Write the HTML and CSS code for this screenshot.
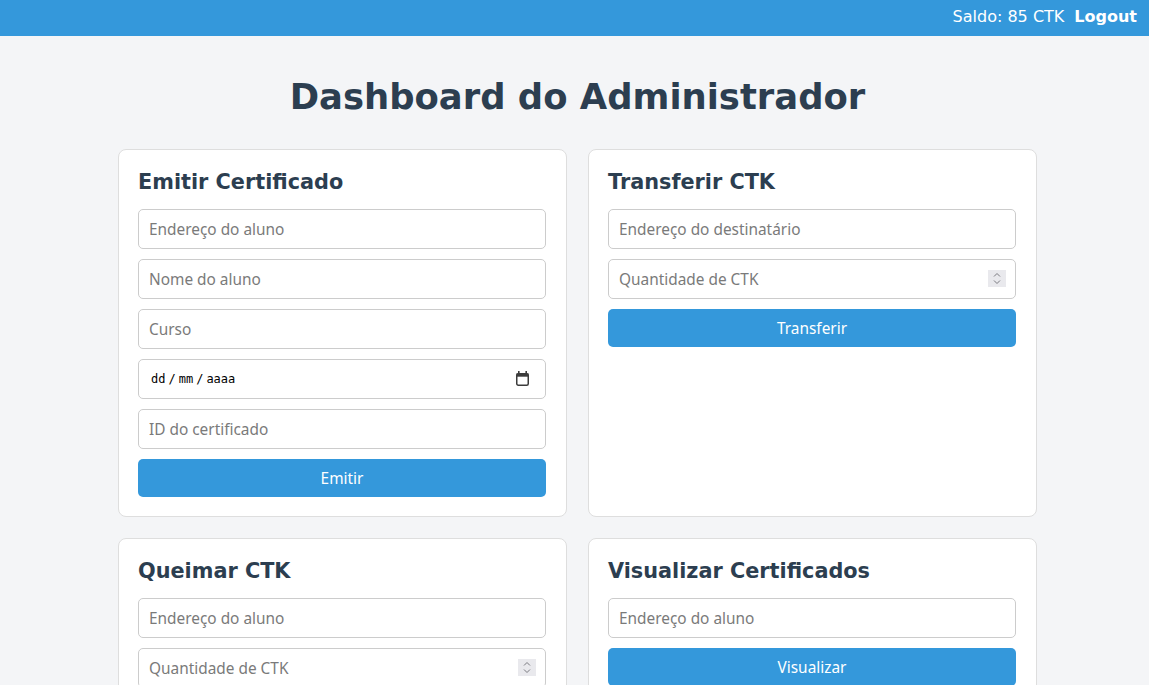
FILE: index.html
```html
<!DOCTYPE html>
<html lang="pt-BR">
<head>
<meta charset="utf-8">
<title>Dashboard do Administrador</title>
<link rel="stylesheet" href="styles.css">
</head>
<body>
<header class="topbar">
  <span class="balance">Saldo: 85 CTK</span>
  <a class="logout" href="#">Logout</a>
</header>
<main class="page">
  <h1 class="title">Dashboard do Administrador</h1>
  <div class="grid">
    <section class="card">
      <h3 class="card-title">Emitir Certificado</h3>
      <input class="field" type="text" placeholder="Endereço do aluno">
      <input class="field" type="text" placeholder="Nome do aluno">
      <input class="field" type="text" placeholder="Curso">
      <div class="field date-field" role="textbox" aria-label="Data">
        <span class="date-part">dd</span><span class="date-sep">/</span><span class="date-part">mm</span><span class="date-sep">/</span><span class="date-part">aaaa</span>
        <svg class="cal-icon" width="15" height="15" viewBox="0 0 15 15" aria-hidden="true">
          <rect x="3" y="0" width="1.6" height="2.5" fill="#3c3c3c"/>
          <rect x="10.4" y="0" width="1.6" height="2.5" fill="#3c3c3c"/>
          <rect x="1.75" y="2.75" width="11.5" height="11.5" rx="1.5" fill="none" stroke="#3c3c3c" stroke-width="1.5"/>
          <rect x="1.5" y="2.5" width="12" height="3.2" fill="#3c3c3c"/>
        </svg>
      </div>
      <input class="field" type="text" placeholder="ID do certificado">
      <button class="btn" type="button">Emitir</button>
    </section>
    <section class="card">
      <h3 class="card-title">Transferir CTK</h3>
      <input class="field" type="text" placeholder="Endereço do destinatário">
      <div class="num-wrap">
        <input class="field num" type="number" placeholder="Quantidade de CTK">
        <span class="spin" aria-hidden="true">
          <svg width="18" height="17" viewBox="0 0 18 17">
            <path d="M6 6.5 L9 3.5 L12 6.5" fill="none" stroke="#7a7a80" stroke-width="1"/>
            <path d="M6 10.5 L9 13.5 L12 10.5" fill="none" stroke="#7a7a80" stroke-width="1"/>
          </svg>
        </span>
      </div>
      <button class="btn" type="button">Transferir</button>
    </section>
    <section class="card">
      <h3 class="card-title">Queimar CTK</h3>
      <input class="field" type="text" placeholder="Endereço do aluno">
      <div class="num-wrap">
        <input class="field num" type="number" placeholder="Quantidade de CTK">
        <span class="spin" aria-hidden="true">
          <svg width="18" height="17" viewBox="0 0 18 17">
            <path d="M6 6.5 L9 3.5 L12 6.5" fill="none" stroke="#7a7a80" stroke-width="1"/>
            <path d="M6 10.5 L9 13.5 L12 10.5" fill="none" stroke="#7a7a80" stroke-width="1"/>
          </svg>
        </span>
      </div>
      <button class="btn" type="button">Queimar</button>
    </section>
    <section class="card">
      <h3 class="card-title">Visualizar Certificados</h3>
      <input class="field" type="text" placeholder="Endereço do aluno">
      <button class="btn" type="button">Visualizar</button>
    </section>
  </div>
</main>
</body>
</html>
```
FILE: styles.css
```css
body {
  margin: 0;
  background: #f4f5f7;
  font-family: "DejaVu Sans", sans-serif;
  color: #2c3e50;
}

.topbar {
  background: #3498db;
  height: 36px;
  box-sizing: border-box;
  padding: 7px 12px 0;
  display: flex;
  justify-content: flex-end;
  gap: 10px;
  color: #fff;
  font-size: 16px;
}

.logout {
  color: #fff;
  font-weight: bold;
  text-decoration: none;
}

.page {
  width: 919px;
  margin: 0 auto;
  padding-left: 6px;
}

.title {
  text-align: center;
  font-size: 35.4px;
  line-height: 41px;
  margin: 40px 0 32px;
  color: #2c3e50;
}

.grid {
  display: grid;
  grid-template-columns: 449px 449px;
  gap: 21px;
}

.card {
  background: #fff;
  border: 1px solid #dedede;
  border-radius: 8px;
  padding: 19px 20px 19px 19px;
  display: flex;
  flex-direction: column;
  gap: 10px;
}

.card-title {
  margin: 0 0 4px;
  font-size: 20.8px;
  line-height: 26px;
  color: #2c3e50;
}

.field {
  height: 40px;
  width: 100%;
  box-sizing: border-box;
  border: 1px solid #ccc;
  border-radius: 5px;
  padding: 0 10px;
  font-family: "Noto Sans", sans-serif;
  font-size: 15.4px;
  color: #222;
  background: #fff;
  margin: 0;
}

.field::placeholder {
  color: #7a7a7a;
}

.date-field {
  display: flex;
  align-items: center;
  padding: 0 15px 0 12px;
  font-family: "DejaVu Sans Mono", monospace;
  font-size: 12px;
  color: #000;
}

.date-sep {
  margin: 0 3px;
}

.cal-icon {
  margin-left: auto;
  margin-top: -2px;
}

.num-wrap {
  position: relative;
}

.num {
  appearance: textfield;
  -moz-appearance: textfield;
}

.num::-webkit-inner-spin-button,
.num::-webkit-outer-spin-button {
  -webkit-appearance: none;
  margin: 0;
}

.spin {
  position: absolute;
  right: 10px;
  top: 11px;
  width: 18px;
  height: 17px;
  background: #e9e9ed;
  pointer-events: none;
  display: flex;
}

.btn {
  height: 38px;
  border: none;
  border-radius: 5px;
  background: #3498db;
  color: #fff;
  font-family: "Noto Sans", sans-serif;
  font-size: 15.4px;
  margin: 0;
}
```
